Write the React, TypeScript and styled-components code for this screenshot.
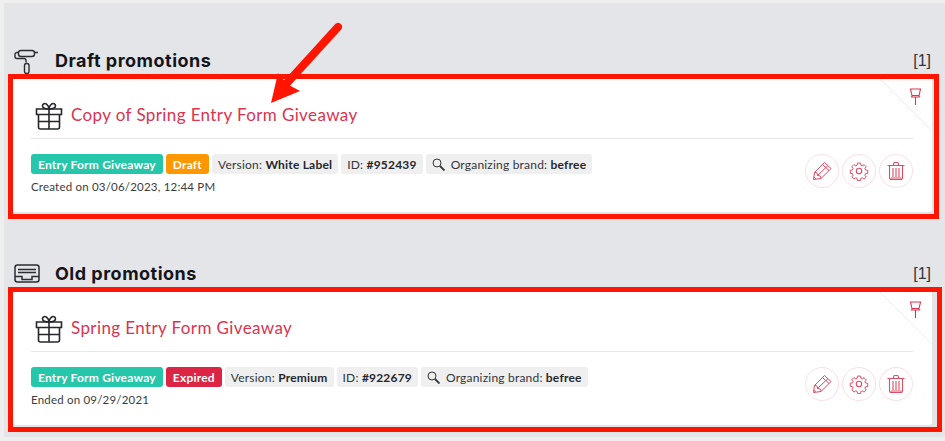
import styled, { createGlobalStyle } from 'styled-components';

const GlobalStyle = createGlobalStyle`
	html,
	body {
		margin: 0;
		padding: 0;
		background: #eeeeee;
	}
	body {
		font-family: 'Lato', 'Liberation Sans', sans-serif;
	}
`;

const Page = styled.div`
	position: relative;
	width: 945px;
	height: 441px;
	box-sizing: border-box;
	padding: 3px 0 4px 4px;
	overflow: hidden;
`;

const Content = styled.main`
	height: 100%;
	background: #e4e5e8;
	padding: 45px 0 0 4px;
	box-sizing: border-box;
	display: flex;
	flex-direction: column;
	gap: 42px;
`;

const Section = styled.section`
	display: flex;
	flex-direction: column;
`;

const SectionHeader = styled.header`
	width: 923px;
	height: 26px;
	display: flex;
	align-items: center;
	box-sizing: border-box;
	padding: 0 0 1px 6px;
`;

const SectionIcon = styled.svg`
	width: 26px;
	height: 26px;
	flex: none;
	color: #2b2d33;
`;

const SectionTitle = styled.h2`
	margin: 0 0 0 15px;
	flex: 1;
	font-family: 'Inter', 'Liberation Sans', sans-serif;
	font-size: 18px;
	font-weight: 700;
	letter-spacing: 0.5px;
	color: #14151a;
`;

const Count = styled.span`
	font-family: 'Liberation Sans', sans-serif;
	font-size: 16px;
	color: #33353a;
`;

const Frame = styled.div<{ $gutter: number }>`
	border: 5px solid #ff1500;
	padding: 0 ${(p) => p.$gutter}px 2px 0;
	width: fit-content;
	background: #e4e5e8;
`;

const Card = styled.article`
	position: relative;
	width: 919px;
	height: 133px;
	box-sizing: border-box;
	padding: 0 19px 0 18px;
	background: #fff;
	border-radius: 0 0 3px 3px;
`;

const CornerFold = styled.div`
	position: absolute;
	top: 0;
	right: 0;
	width: 52px;
	height: 52px;
	background: linear-gradient(45deg, transparent 49.5%, #ececec 49.5%, #ececec 50.5%, #fff 50.5%);
`;

const PinIcon = styled.svg`
	position: absolute;
	top: 9px;
	right: 10px;
	width: 13px;
	height: 18px;
	color: #dc3450;
`;

const TitleRow = styled.div`
	height: 60px;
	box-sizing: border-box;
	padding: 23px 0 0 4px;
	display: flex;
	align-items: flex-start;
	border-bottom: 1px solid #e8e8e8;
`;

const GiftIcon = styled.svg`
	width: 28px;
	height: 28px;
	flex: none;
	color: #26272c;
`;

const CardTitle = styled.h3`
	margin: 2px 0 0 8px;
	font-size: 17px;
	font-weight: 400;
	letter-spacing: 0.39px;
	color: #da3450;
`;

const Footer = styled.div`
	margin-top: 15px;
	display: flex;
	justify-content: space-between;
	align-items: flex-start;
`;

const Badges = styled.div`
	display: flex;
	gap: 3px;
`;

const Badge = styled.span<{ $tone: string }>`
	height: 20px;
	box-sizing: border-box;
	padding: 0 7px;
	display: inline-flex;
	align-items: center;
	border-radius: 3px;
	font-size: 12px;
	font-weight: 700;
	letter-spacing: 0.2px;
	white-space: pre;
	color: #fff;
	background: ${(p) => p.$tone};
`;

const InfoBadge = styled.span`
	height: 20px;
	box-sizing: border-box;
	padding: 0 6px;
	display: inline-flex;
	align-items: center;
	border-radius: 3px;
	font-size: 12px;
	letter-spacing: 0.2px;
	white-space: pre;
	color: #33353a;
	background: #efefef;

	b {
		font-weight: 700;
		color: #26272c;
	}
`;

const SearchIcon = styled.svg`
	width: 13px;
	height: 13px;
	margin-right: 6px;
	color: #33353a;
`;

const Meta = styled.p`
	margin: 6px 0 0;
	font-size: 11.5px;
	letter-spacing: 0.2px;
	color: #3a3c41;
`;

const Actions = styled.div`
	display: flex;
	gap: 3px;
`;

const ActionButton = styled.button`
	width: 34px;
	height: 34px;
	padding: 0;
	display: flex;
	align-items: center;
	justify-content: center;
	border: 1px solid #fbdfe3;
	border-radius: 50%;
	background: #fff;
	color: #e04a63;
`;

const ActionIcon = styled.svg`
	width: 20px;
	height: 20px;
`;

const ArrowOverlay = styled.svg`
	position: absolute;
	top: 0;
	left: 0;
	pointer-events: none;
`;

const RollerGlyph = () => (
	<SectionIcon viewBox='0 0 26 26' fill='none' stroke='currentColor' strokeWidth='1.4'>
		<rect x='4.5' y='2.5' width='16' height='6' rx='2.5' />
		<path d='M20.5 4.500h3.500M4.500 4.500H3c-1.500 0-2 1-2 2v2c0 1 .6 2 2 2h7c1.200 0 2 .6 2 2v2' />
		<rect x='10.5' y='15.5' width='4.5' height='10' rx='2' />
	</SectionIcon>
);

const TrayGlyph = () => (
	<SectionIcon viewBox='0 0 26 26' fill='none' stroke='currentColor' strokeWidth='1.5'>
		<rect x='1' y='4' width='24' height='17' rx='2.5' />
		<path d='M4 8.500h18M4 11.500h18M1 15.500h7v3h10v-3h7' />
	</SectionIcon>
);

const Gift = () => (
	<GiftIcon viewBox='0 0 28 28' fill='none' stroke='currentColor' strokeWidth='1.6'>
		<path d='M1.500 7h25v5.500h-25zM3.500 12.500V25a2 2 0 0 0 2 2h17a2 2 0 0 0 2-2V12.500M14 7v20M3.500 19.500h21' />
		<path d='M14 7C11 7 7.500 6.500 7.500 3.800 7.500 1.500 10 1 11.500 2.200 13 3.400 14 5 14 7c0-2 1-3.600 2.500-4.800C18 1 20.500 1.500 20.500 3.800 20.500 6.500 17 7 14 7z' />
	</GiftIcon>
);

const Pin = () => (
	<PinIcon viewBox='0 0 13 18' fill='none' stroke='currentColor' strokeWidth='1.1'>
		<path d='M1.500 1h10l-1.500 6.500H3zM1.800 9h9.400M3 7.500V9M10 7.500V9M6.500 9v8' />
	</PinIcon>
);

const Pencil = () => (
	<ActionIcon viewBox='0 0 20 20' fill='none' stroke='currentColor' strokeWidth='1'>
		<path d='M1.500 18.500L2.500 11.500 12.500 1.500 19 7.500 9 17.500z' />
		<path d='M2.500 11.500c2.500 0 3 .5 3 3 2.500 0 3.500.5 3.500 3M5.500 14.500L16 4.500M10.500 3.500l6.500 6M1.800 16l2 2' />
	</ActionIcon>
);

const Gear = () => (
	<ActionIcon viewBox='0 0 20 20' fill='none' stroke='currentColor' strokeWidth='1.1'>
		<circle cx='10' cy='10' r='2.700' />
		<path d='M8.300 1.200h3.400l.4 2.500 1.500.7 2.100-1.400 2.300 2.400-1.400 2 .6 1.500 2.500.4v3.400l-2.500.4-.7 1.500 1.500 2.100-2.400 2.300-2-1.400-1.500.6-.4 2.500H8.300l-.4-2.500-1.500-.6-2 1.400L2 16.600l1.500-2.100-.7-1.500-2.500-.4V9.200l2.500-.4.6-1.500-1.400-2 2.300-2.400 2.100 1.400 1.500-.7z' transform='translate(1 1) scale(.9)' />
	</ActionIcon>
);

const Trash = () => (
	<ActionIcon viewBox='0 0 20 20' fill='none' stroke='currentColor' strokeWidth='1.1'>
		<path d='M1.500 4.500h17M7.500 4.500V3c0-.8.500-1.500 1.300-1.500h2.400c.8 0 1.300.7 1.300 1.500v1.500' />
		<path d='M3.500 4.500V16.500c0 1.200.8 2 2 2h9c1.200 0 2-.8 2-2V4.500M7 7v9M10 7v9M13 7v9M5 17h10' />
	</ActionIcon>
);

const Search = () => (
	<SearchIcon viewBox='0 0 13 13' fill='none' stroke='currentColor' strokeWidth='1'>
		<circle cx='5' cy='5' r='4' />
		<path d='M8 8l4.500 4.500' strokeWidth='1.800' />
	</SearchIcon>
);

type PromotionProps = {
	title: string;
	status: string;
	statusTone: string;
	version: string;
	id: string;
	meta: string;
	gutter: number;
};

const Promotion = ({ title, status, statusTone, version, id, meta, gutter }: PromotionProps) => (
	<Frame $gutter={gutter}>
		<Card>
			<CornerFold />
			<Pin />
			<TitleRow>
				<Gift />
				<CardTitle>{title}</CardTitle>
			</TitleRow>
			<Footer>
				<div>
					<Badges>
						<Badge $tone='#26c6aa'>Entry Form Giveaway</Badge>
						<Badge $tone={statusTone}>{status}</Badge>
						<InfoBadge>
							Version: <b>{version}</b>
						</InfoBadge>
						<InfoBadge>
							ID: <b>{id}</b>
						</InfoBadge>
						<InfoBadge>
							<Search />
							Organizing brand: <b>befree</b>
						</InfoBadge>
					</Badges>
					<Meta>{meta}</Meta>
				</div>
				<Actions>
					<ActionButton aria-label='Edit'>
						<Pencil />
					</ActionButton>
					<ActionButton aria-label='Settings'>
						<Gear />
					</ActionButton>
					<ActionButton aria-label='Delete'>
						<Trash />
					</ActionButton>
				</Actions>
			</Footer>
		</Card>
	</Frame>
);

export default function App() {
	return (
		<Page>
			<GlobalStyle />
			<Content>
				<Section>
					<SectionHeader>
						<RollerGlyph />
						<SectionTitle>Draft promotions</SectionTitle>
						<Count>[1]</Count>
					</SectionHeader>
					<Promotion
						title='Copy of Spring Entry Form Giveaway'
						status='Draft'
						statusTone='#ff9800'
						version='White Label'
						id='#952439'
						meta='Created on 03/06/2023, 12:44 PM'
						gutter={2}
					/>
				</Section>
				<Section>
					<SectionHeader>
						<TrayGlyph />
						<SectionTitle>Old promotions</SectionTitle>
						<Count>[1]</Count>
					</SectionHeader>
					<Promotion
						title='Spring Entry Form Giveaway'
						status='Expired'
						statusTone='#dc2545'
						version='Premium'
						id='#922679'
						meta='Ended on 09/29/2021'
						gutter={5}
					/>
				</Section>
			</Content>
			<ArrowOverlay width='945' height='441' viewBox='0 0 945 441'>
				<path d='M338 27L287 83' stroke='#ff1500' strokeWidth='8' strokeLinecap='round' fill='none' />
				<path d='M271 103L278 73L287 84L300 91z' fill='#ff1500' />
			</ArrowOverlay>
		</Page>
	);
}
